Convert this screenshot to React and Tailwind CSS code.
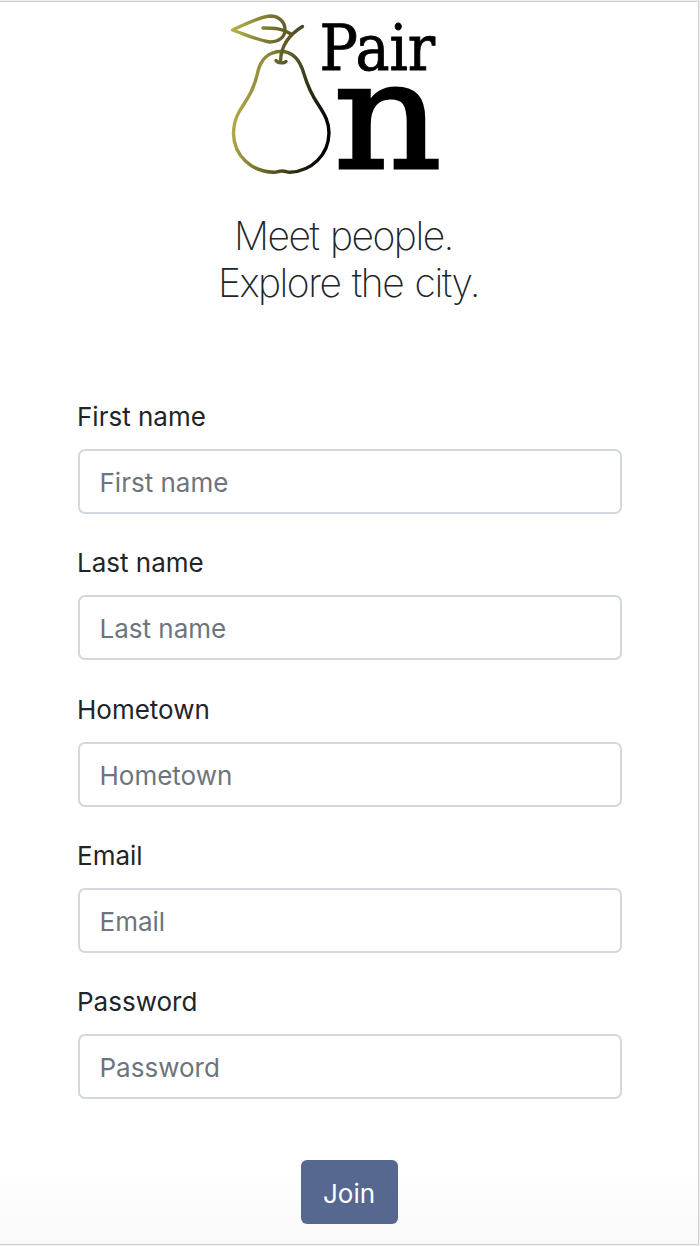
import React from 'react';

const fields = [
  { label: 'First name', type: 'text' },
  { label: 'Last name', type: 'text' },
  { label: 'Hometown', type: 'text' },
  { label: 'Email', type: 'email' },
  { label: 'Password', type: 'password' },
];

function Logo() {
  return (
    <svg className="h-[180px] w-[240px] overflow-visible" viewBox="220 0 240 180" role="img" aria-label="Pair On">
      <defs>
        <linearGradient id="pear" gradientUnits="userSpaceOnUse" x1="232" y1="110" x2="328" y2="128">
          <stop offset="0" stopColor="#b7b148" />
          <stop offset="0.5" stopColor="#5f5c27" />
          <stop offset="1" stopColor="#000000" />
        </linearGradient>
        <linearGradient id="leaf" gradientUnits="userSpaceOnUse" x1="232" y1="30" x2="304" y2="40">
          <stop offset="0" stopColor="#b7b148" />
          <stop offset="0.6" stopColor="#6f6b2e" />
          <stop offset="1" stopColor="#45421c" />
        </linearGradient>
      </defs>
      <g fill="none" strokeWidth="3.4" strokeLinecap="round" strokeLinejoin="round">
        <path stroke="url(#pear)" d="M281 51.500C269 51.500 261 59 258 71C254 91 246 100 239 112C235 119 233.500 126 233.500 134C234 156 252 172 274 172.300C278 172.300 278 171 282 171C286 171 286 172.300 290 172.300C312 171 328.500 155 329 133C329 122 325 115 318.500 105C311 94 307 84 304 74C300 60 293 51.500 281 51.500Z" />
        <path stroke="url(#leaf)" d="M232.500 30C243 25 261 16.500 270 16C279 16 285 22 285 29.500C285 37 279 42 270 42C260 41 244 34 232.500 30Z" />
        <path stroke="url(#leaf)" d="M263 28C274 28 283 28.500 291 34M302.500 26.500C290 34 281 44 280.500 61M276 60.500C278 63.500 284 63.500 286 61.500" />
      </g>
      <g fill="#000" stroke="#000" fontFamily="'DejaVu Serif', serif">
        <text transform="translate(319.500 69.500) scale(.908 1)" fontSize="63" strokeWidth="0.900">Pair</text>
        <text transform="translate(333.500 167.500) scale(1.120 1)" fontSize="150" strokeWidth="3">n</text>
      </g>
    </svg>
  );
}

export default function App() {
  return (
    <div className="h-[1246px] w-[700px] bg-[#f0f0f0] pt-px pr-px pb-px font-['Inter',sans-serif] text-[#212529]">
      <main className="flex h-[1244px] flex-col items-center border-t border-r border-b border-[#cfcfcf] bg-[linear-gradient(to_bottom,#ffffff_94%,#f9f9f9_100%)]">
        <div className="-mt-0.5 flex h-[180px] w-full pl-[220px]">
          <Logo />
        </div>
        <h1 className="mt-8 w-full text-center text-[39px] leading-[47px] font-extralight tracking-[-1.500px] [word-spacing:2px]">
          <span className="block pr-[11px]">Meet people.</span>
          <span className="block pr-px">Explore the city.</span>
        </h1>
        <form className="mt-[91px] ml-px flex w-[544px] flex-col items-center" onSubmit={(e) => e.preventDefault()}>
          {fields.map(({ label, type }) => (
            <label key={label} className="flex h-[146.250px] w-full flex-col text-[26px] leading-10">
              <span className="-ml-[0.500px]">{label}</span>
              <input
                type={type}
                placeholder={label}
                className="mt-3 h-[65px] w-full rounded-[7px] border-2 border-[#d3d8de] bg-white px-5 pt-0.5 placeholder:text-[#6c757d] placeholder:opacity-100"
              />
            </label>
          ))}
          <button type="submit" className="mt-8 mr-px h-[64px] w-[97px] rounded-[6px] bg-[#56688f] pt-0.5 text-[26px] text-white">
            Join
          </button>
        </form>
      </main>
    </div>
  );
}
